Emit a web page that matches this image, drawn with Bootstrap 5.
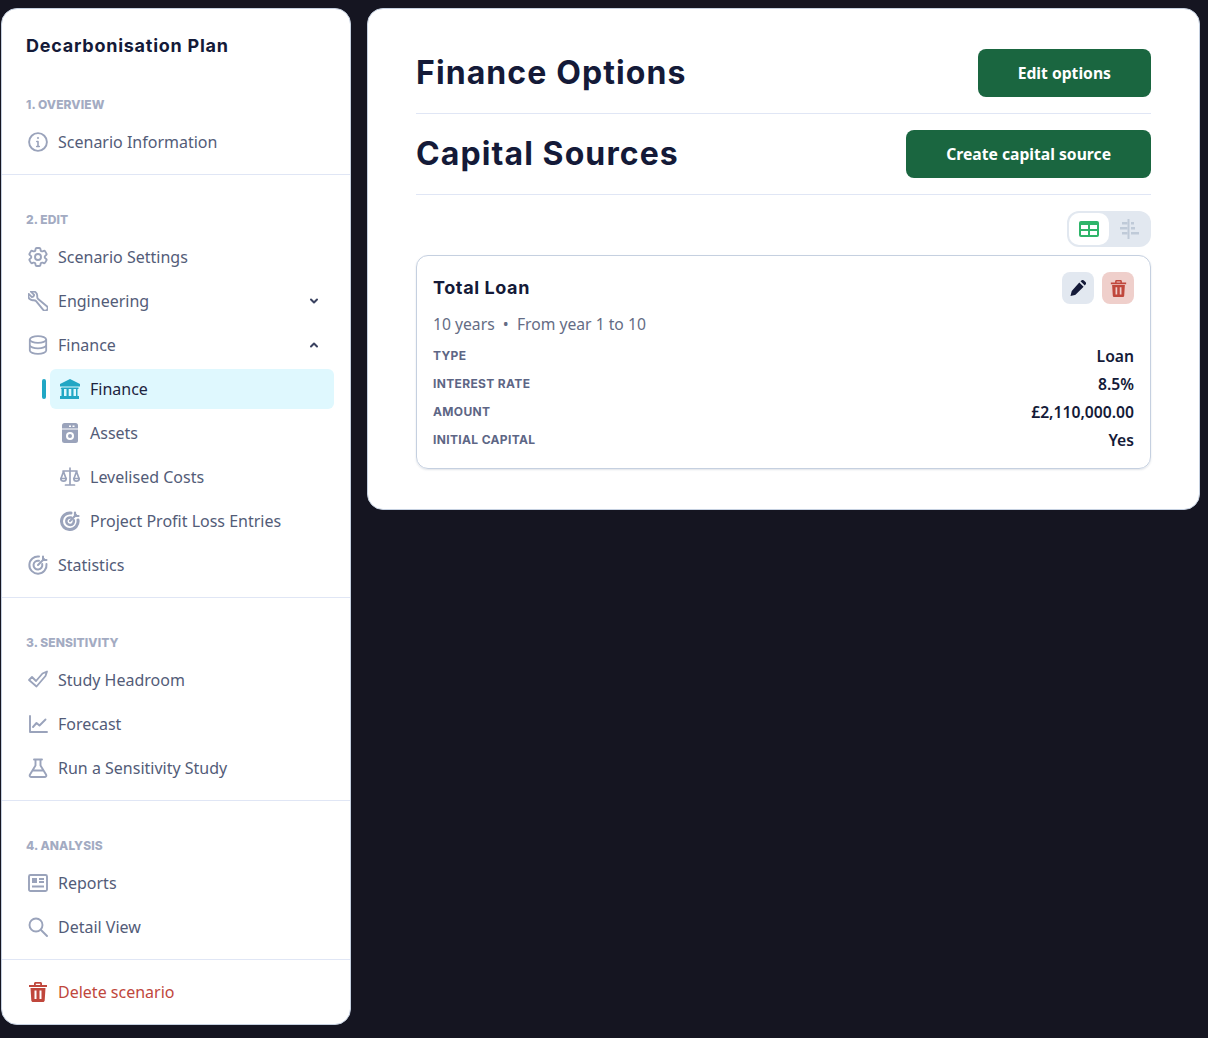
<!DOCTYPE html>
<html lang="en">
<head>
    <meta charset="UTF-8">
    <meta name="viewport" content="width=device-width, initial-scale=1.0">
    <title>Finance Options</title>
    <link href="https://cdn.jsdelivr.net/npm/bootstrap@5.3.0/dist/css/bootstrap.min.css" rel="stylesheet">
    <style>
        body {
            background: #151521;
            color: #141a38;
            font-family: "Noto Sans", "Liberation Sans", sans-serif;
        }

        .page-wrap {
            padding: 8px 8px 0 1px;
            gap: 16px;
            align-items: flex-start;
        }

        .side-panel {
            width: 350px;
            flex: none;
            background: #fff;
            border: 1px solid #c5d0e0;
            border-radius: 16px;
        }

        .side-group {
            padding: 37px 16px 12px 16px;
            border-bottom: 1px solid #e0e6f5;
        }

        .side-group:first-child {
            padding-top: 25px;
        }

        .side-group:last-child {
            border-bottom: 0;
            padding-top: 12px;
        }

        .plan-title {
            font-family: Inter, sans-serif;
            font-weight: 700;
            font-size: 18px;
            line-height: 24px;
            letter-spacing: .75px;
            color: #141a38;
            margin: 0 0 39px 8px;
        }

        .group-label {
            font-family: Inter, sans-serif;
            font-weight: 800;
            font-size: 12px;
            line-height: 16px;
            letter-spacing: .1px;
            color: #a3abc2;
            margin: 0 0 9px 8px;
        }

        .nav-line {
            height: 40px;
            padding-left: 10px;
            margin-bottom: 4px;
            gap: 10px;
            font-size: 16px;
            color: #535c78;
            border-radius: 6px;
        }

        .nav-line:last-child {
            margin-bottom: 0;
        }

        .nav-line.sub-line {
            margin-left: 32px;
        }

        .nav-line.is-active {
            background: #dff8fe;
            color: #1d2440;
        }

        .nav-line.is-active::before {
            content: "";
            position: absolute;
            left: -8px;
            top: 10px;
            width: 4px;
            height: 20px;
            border-radius: 2px;
            background: #22a7c4;
        }

        .nav-line.is-danger {
            color: #c0473c;
        }

        .nav-ico {
            width: 20px;
            height: 20px;
            flex: none;
            color: #9aa3bb;
        }

        .nav-arrow {
            width: 10px;
            height: 10px;
            margin-left: auto;
            margin-right: 15px;
            color: #3a4260;
        }

        .main-panel {
            width: 833px;
            flex: none;
            background: #fff;
            border: 1px solid #c5d0e0;
            border-radius: 16px;
            padding: 40px 48px;
        }

        .head-row {
            border-bottom: 1px solid #e0e6f5;
            padding-bottom: 16px;
            margin-bottom: 16px;
        }

        .head-title {
            font-family: Inter, sans-serif;
            font-weight: 700;
            font-size: 32px;
            line-height: 48px;
            letter-spacing: 1.1px;
            margin: 0;
        }

        .green-btn {
            height: 48px;
            padding: 1px 40px 0;
            background: #1a6640;
            color: #fff;
            border: 0;
            border-radius: 8px;
            font-family: "Noto Sans", sans-serif;
            font-weight: 700;
            font-size: 15.7px;
        }

        .green-btn:hover {
            background: #1a6640;
            color: #fff;
        }

        .view-toggle {
            width: 84px;
            height: 36px;
            padding: 2px;
            background: #e2e8f0;
            border-radius: 12px;
            margin: 0 0 8px auto;
        }

        .view-opt {
            width: 40px;
            height: 32px;
            border-radius: 10px;
        }

        .view-opt.is-on {
            background: #fff;
        }

        .loan-box {
            border: 1px solid #c5d0e0;
            border-radius: 12px;
            padding: 16px 16px 14px;
            box-shadow: 0 1px 2px rgba(100, 116, 139, .2);
        }

        .loan-title {
            font-family: Inter, sans-serif;
            font-weight: 700;
            font-size: 18px;
            line-height: 32px;
            letter-spacing: .6px;
            margin: 0;
        }

        .tool-btn {
            width: 32px;
            height: 32px;
            border-radius: 8px;
            background: #e2e8f0;
            color: #141a38;
        }

        .tool-btn.is-red {
            background: #efcfcb;
            color: #c0473c;
        }

        .loan-sub {
            font-size: 15.7px;
            line-height: 24px;
            color: #646c85;
            margin: 8px 0 6px;
        }

        .loan-line {
            height: 28px;
        }

        .loan-key {
            font-family: Inter, sans-serif;
            font-weight: 700;
            font-size: 12px;
            letter-spacing: .35px;
            color: #5d6685;
        }

        .loan-val {
            font-size: 15.7px;
            font-weight: 600;
            position: relative;
            top: 1px;
        }
    </style>
</head>
<body>
<div class="d-flex page-wrap">
    <!-- Sidebar -->
    <aside class="side-panel">
        <div class="side-group">
            <h1 class="plan-title">Decarbonisation Plan</h1>
            <div class="group-label">1. OVERVIEW</div>
            <div class="nav-line d-flex align-items-center">
                <svg class="nav-ico" viewBox="0 0 20 20" fill="none" stroke="currentColor" stroke-width="1.9"><circle cx="10" cy="10" r="8.900"/><path d="M10 9.500v5M8.700 14.500h2.600M8.800 9.500H10" stroke-width="1.600" stroke-linecap="round"/><circle cx="10" cy="6" r=".7" stroke-width="1"/></svg>
                <span>Scenario Information</span>
            </div>
        </div>
        <div class="side-group">
            <div class="group-label">2. EDIT</div>
            <div class="nav-line d-flex align-items-center">
                <svg class="nav-ico" viewBox="2 2 20 20" fill="none" stroke="currentColor" stroke-width="1.9"><path d="M9.594 3.94c.09-.542.56-.94 1.11-.94h2.593c.55 0 1.02.398 1.11.94l.213 1.281c.063.374.313.686.645.87.074.04.147.083.22.127.325.196.72.257 1.075.124l1.217-.456a1.125 1.125 0 0 1 1.37.49l1.296 2.247a1.125 1.125 0 0 1-.26 1.431l-1.003.827c-.293.241-.438.613-.43.992a7.723 7.723 0 0 1 0 .255c-.008.378.137.75.43.991l1.004.827c.424.35.534.955.26 1.43l-1.298 2.247a1.125 1.125 0 0 1-1.369.491l-1.217-.456c-.355-.133-.75-.072-1.076.124a6.47 6.47 0 0 1-.22.128c-.331.183-.581.495-.644.869l-.213 1.281c-.09.543-.56.94-1.11.94h-2.594c-.55 0-1.019-.398-1.11-.94l-.213-1.281c-.062-.374-.312-.686-.644-.87a6.52 6.52 0 0 1-.22-.127c-.325-.196-.72-.257-1.076-.124l-1.217.456a1.125 1.125 0 0 1-1.369-.49l-1.297-2.247a1.125 1.125 0 0 1 .26-1.431l1.004-.827c.292-.24.437-.613.43-.991a6.932 6.932 0 0 1 0-.255c.007-.38-.138-.751-.43-.992l-1.004-.827a1.125 1.125 0 0 1-.26-1.43l1.297-2.247a1.125 1.125 0 0 1 1.37-.491l1.216.456c.356.133.751.072 1.076-.124.072-.044.146-.086.22-.128.332-.183.582-.495.644-.869l.214-1.28Z"/><circle cx="12" cy="12" r="3"/></svg>
                <span>Scenario Settings</span>
            </div>
            <div class="nav-line d-flex align-items-center">
                <svg class="nav-ico" viewBox="2 2 20 20" fill="none" stroke="currentColor" stroke-width="1.9" stroke-linejoin="round"><path transform="translate(24 0) scale(-1 1)" d="M21.75 6.75a4.5 4.5 0 0 1-4.884 4.484c-1.076-.091-2.264.071-2.95.904l-7.152 8.684a2.548 2.548 0 1 1-3.586-3.586l8.684-7.152c.833-.686.995-1.874.904-2.95a4.5 4.5 0 0 1 6.336-4.486l-3.276 3.276a3.004 3.004 0 0 0 2.25 2.25l3.276-3.276c.256.565.398 1.192.398 1.852Z"/></svg>
                <span>Engineering</span>
                <svg class="nav-arrow" viewBox="0 0 10 10" fill="none" stroke="currentColor" stroke-width="2" stroke-linecap="round" stroke-linejoin="round"><path d="M2 3.5 5 6.5 8 3.5"/></svg>
            </div>
            <div class="nav-line d-flex align-items-center">
                <svg class="nav-ico" viewBox="0 0 20 20" fill="none" stroke="currentColor" stroke-width="1.8"><ellipse cx="10" cy="4.500" rx="8.200" ry="3.300"/><path d="M1.800 4.500v11c0 1.800 3.700 3.300 8.200 3.300s8.200-1.500 8.200-3.300v-11M1.800 10c0 1.800 3.700 3.300 8.200 3.300s8.200-1.500 8.200-3.300"/></svg>
                <span>Finance</span>
                <svg class="nav-arrow" viewBox="0 0 10 10" fill="none" stroke="currentColor" stroke-width="2" stroke-linecap="round" stroke-linejoin="round"><path d="M2 6.5 5 3.5 8 6.5"/></svg>
            </div>
            <div class="nav-line sub-line is-active d-flex align-items-center position-relative">
                <svg class="nav-ico" style="color:#22a7c4" viewBox="0 0 20 20" fill="currentColor"><path d="M10 0 20 5v2.500H0V5Z"/><path d="M1.500 8.500h17V10h-1v7h1.500v3H0v-3h1.500v-7h-1ZM4 10v7h2.500v-7ZM8.700 10v7h2.600v-7ZM13.500 10v7H16v-7Z" fill-rule="evenodd"/></svg>
                <span>Finance</span>
            </div>
            <div class="nav-line sub-line d-flex align-items-center">
                <svg class="nav-ico" viewBox="0 0 20 20"><rect x="2" y="0" width="16" height="20" rx="2.500" fill="currentColor"/><rect x="9" y="2.500" width="2" height="1.500" fill="#fff"/><rect x="12.500" y="2.500" width="2" height="1.500" fill="#fff"/><rect x="2" y="5.500" width="16" height="1" fill="#fff"/><circle cx="10" cy="13" r="4" fill="#fff"/><circle cx="10" cy="13" r="2" fill="currentColor"/></svg>
                <span>Assets</span>
            </div>
            <div class="nav-line sub-line d-flex align-items-center">
                <svg class="nav-ico" viewBox="0 0 20 20" fill="none" stroke="currentColor" stroke-width="1.7" stroke-linecap="round"><path d="M10 1v16M5.500 18h9M3 4h14M3.500 4.500 1 11.500M3.500 4.500 6 11.500M16.500 4.500 14 11.500M16.500 4.500 19 11.500"/><path d="M.8 11.500a2.700 2.700 0 0 0 5.400 0ZM13.800 11.500a2.700 2.700 0 0 0 5.400 0Z"/></svg>
                <span>Levelised Costs</span>
            </div>
            <div class="nav-line sub-line d-flex align-items-center">
                <svg class="nav-ico" viewBox="0 0 20 20" fill="none" stroke="currentColor" stroke-width="3" stroke-linecap="round"><path d="M11 2a8.300 8.300 0 1 0 7 7"/><path d="M11 6.500a3.800 3.800 0 1 0 2.800 2.800" stroke-width="2.500"/><path d="M10 10 16 4" stroke-width="2.200"/><path d="M15 1.500v3.500h3.500" stroke-width="2.200"/></svg>
                <span>Project Profit Loss Entries</span>
            </div>
            <div class="nav-line d-flex align-items-center">
                <svg class="nav-ico" viewBox="0 0 20 20" fill="none" stroke="currentColor" stroke-width="2" stroke-linecap="round"><path d="M11 1.500a8.600 8.600 0 1 0 7.500 7.500"/><path d="M11 5.800a4.400 4.400 0 1 0 3.200 3.200"/><path d="M10 10 16 4"/><path d="M15 1.500v3.500h3.500"/></svg>
                <span>Statistics</span>
            </div>
        </div>
        <div class="side-group">
            <div class="group-label">3. SENSITIVITY</div>
            <div class="nav-line d-flex align-items-center">
                <svg class="nav-ico" viewBox="0 0 20 20" fill="none" stroke="currentColor" stroke-width="1.8" stroke-linejoin="round"><path d="M1 10 4 7 8 11 14.500 3.500 19 1.500 17.500 6 8.500 16.500Z"/></svg>
                <span>Study Headroom</span>
            </div>
            <div class="nav-line d-flex align-items-center">
                <svg class="nav-ico" viewBox="0 0 20 20" fill="none" stroke="currentColor" stroke-width="1.9" stroke-linecap="round" stroke-linejoin="round"><path d="M2 2v16h17M5 13l3.500-4 3 2.500 6-6"/></svg>
                <span>Forecast</span>
            </div>
            <div class="nav-line d-flex align-items-center">
                <svg class="nav-ico" viewBox="0 0 20 20" fill="none" stroke="currentColor" stroke-width="1.9" stroke-linejoin="round" stroke-linecap="round"><path d="M6 1.500h8M7.500 1.500v6L2 16.500c-.8 1.300 0 2.500 1.500 2.500h13c1.500 0 2.300-1.200 1.500-2.500l-5.500-9v-6M5 12.500h10"/></svg>
                <span>Run a Sensitivity Study</span>
            </div>
        </div>
        <div class="side-group">
            <div class="group-label">4. ANALYSIS</div>
            <div class="nav-line d-flex align-items-center">
                <svg class="nav-ico" viewBox="0 0 20 20" fill="none" stroke="currentColor" stroke-width="1.9"><rect x="1" y="2" width="18" height="16" rx="1.500"/><rect x="4" y="5" width="5" height="5" fill="currentColor" stroke="none"/><path d="M11 6h5M11 9h5M4 13.500h12"/></svg>
                <span>Reports</span>
            </div>
            <div class="nav-line d-flex align-items-center">
                <svg class="nav-ico" viewBox="0 0 20 20" fill="none" stroke="currentColor" stroke-width="1.9" stroke-linecap="round"><circle cx="8" cy="8" r="6.500"/><path d="m13 13 6 6"/></svg>
                <span>Detail View</span>
            </div>
        </div>
        <div class="side-group">
            <div class="nav-line is-danger d-flex align-items-center">
                <svg class="nav-ico" style="color:#c0473c" viewBox="0 0 20 20" fill="currentColor"><path d="M6 3V1.500C6 .7 6.700 0 7.500 0h5c.8 0 1.500.7 1.500 1.500V3h5v2H1V3Zm1.800 0h4.400V1.700H7.800Z" fill-rule="evenodd"/><path d="M2.500 6h15l-.8 12.500c-.1.900-.8 1.500-1.700 1.500H5c-.9 0-1.600-.6-1.700-1.500ZM6.500 8.500V17h2V8.500ZM11.500 8.500V17h2V8.500Z" fill-rule="evenodd"/></svg>
                <span>Delete scenario</span>
            </div>
        </div>
    </aside>

    <!-- Main content -->
    <main class="main-panel">
        <div class="head-row d-flex justify-content-between align-items-center">
            <h2 class="head-title">Finance Options</h2>
            <button type="button" class="btn green-btn">Edit options</button>
        </div>
        <div class="head-row d-flex justify-content-between align-items-center">
            <h2 class="head-title">Capital Sources</h2>
            <button type="button" class="btn green-btn">Create capital source</button>
        </div>
        <div class="view-toggle d-flex">
            <div class="view-opt is-on d-flex align-items-center justify-content-center">
                <svg width="20" height="16" viewBox="0 0 20 16"><rect width="20" height="16" rx="2" fill="#2fb56a"/><path d="M2 4h7v4H2ZM11 4h7v4h-7ZM2 10h7v4H2ZM11 10h7v4h-7Z" fill="#fff"/></svg>
            </div>
            <div class="view-opt d-flex align-items-center justify-content-center">
                <svg width="20" height="20" viewBox="0 0 20 20" fill="#bfcad8"><rect x="8.500" width="2" height="20"/><rect x="3" y="3" width="5.500" height="2.500"/><rect x="12" y="3" width="3" height="2.500"/><rect x="1" y="8" width="7.500" height="2.500"/><rect x="12" y="8" width="4" height="2.500"/><rect x="3" y="13" width="5.500" height="2.500"/><rect x="12" y="13" width="8" height="2.500"/></svg>
            </div>
        </div>
        <div class="loan-box">
            <div class="d-flex justify-content-between align-items-center">
                <h3 class="loan-title">Total Loan</h3>
                <div class="d-flex gap-2">
                    <div class="tool-btn d-flex align-items-center justify-content-center">
                        <svg width="16" height="16" viewBox="0 0 16 16" fill="currentColor"><path d="M9.300 2.400 13.600 6.700 6 14.300c-.3.300-.7.500-1.100.6L.5 16l1.100-4.400c.1-.4.300-.8.600-1.100Z"/><path d="M10.500 1.200 11.400.5c.7-.7 1.800-.7 2.500 0l1.600 1.600c.7.700.7 1.800 0 2.500l-.7.900Z"/></svg>
                    </div>
                    <div class="tool-btn is-red d-flex align-items-center justify-content-center">
                        <svg width="17" height="17" viewBox="0 0 20 20" fill="currentColor"><path d="M6 3V1.500C6 .7 6.700 0 7.500 0h5c.8 0 1.500.7 1.500 1.500V3h5v2H1V3Zm1.800 0h4.400V1.700H7.800Z" fill-rule="evenodd"/><path d="M2.500 6h15l-.8 12.500c-.1.900-.8 1.500-1.700 1.500H5c-.9 0-1.600-.6-1.700-1.500ZM6.500 8.500V17h2V8.500ZM11.500 8.500V17h2V8.500Z" fill-rule="evenodd"/></svg>
                    </div>
                </div>
            </div>
            <p class="loan-sub">10 years &nbsp;•&nbsp; From year 1 to 10</p>
            <div class="loan-line d-flex justify-content-between align-items-center">
                <span class="loan-key">TYPE</span><span class="loan-val">Loan</span>
            </div>
            <div class="loan-line d-flex justify-content-between align-items-center">
                <span class="loan-key">INTEREST RATE</span><span class="loan-val">8.5%</span>
            </div>
            <div class="loan-line d-flex justify-content-between align-items-center">
                <span class="loan-key">AMOUNT</span><span class="loan-val">£2,110,000.00</span>
            </div>
            <div class="loan-line d-flex justify-content-between align-items-center">
                <span class="loan-key">INITIAL CAPITAL</span><span class="loan-val">Yes</span>
            </div>
        </div>
    </main>
</div>
<script src="https://cdn.jsdelivr.net/npm/bootstrap@5.3.0/dist/js/bootstrap.bundle.min.js"></script>
</body>
</html>
